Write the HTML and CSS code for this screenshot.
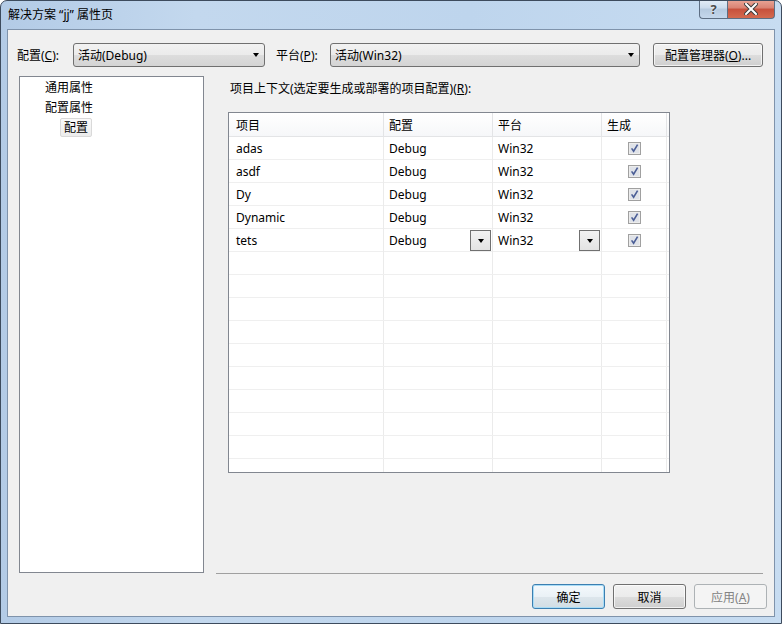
FILE: index.html
```html
<!DOCTYPE html>
<html lang="zh-CN">
<head>
  <meta charset="UTF-8">
  <meta name="viewport" content="width=device-width, initial-scale=1.0">
  <title>解决方案 “jj” 属性页</title>
  <link rel="stylesheet" href="styles.css">
</head>
<body>
  <div class="window">
    <div class="titlebar">
      <span class="title">解决方案 “jj” 属性页</span>
      <div class="caption-buttons">
        <div class="cap help">?</div>
        <div class="cap close">
          <svg width="14" height="12" viewBox="0 0 14 12">
            <path d="M2 1 L12 11 M12 1 L2 11" stroke="#3b3b3b" stroke-width="4" stroke-linecap="square"/>
            <path d="M2 1 L12 11 M12 1 L2 11" stroke="#fff" stroke-width="2" stroke-linecap="square"/>
          </svg>
        </div>
      </div>
    </div>

    <div class="client">
      <!-- configuration / platform selectors -->
      <div class="toprow">
        <label class="lbl lbl-cfg">配置(<u>C</u>):</label>
        <div class="combo combo-cfg"><span>活动(Debug)</span><i class="arrow"></i></div>
        <label class="lbl lbl-plat">平台(<u>P</u>):</label>
        <div class="combo combo-plat"><span>活动(Win32)</span><i class="arrow"></i></div>
        <button class="btn btn-mgr">配置管理器(<u>O</u>)...</button>
      </div>

      <div class="main">
        <div class="tree">
          <div class="node">通用属性</div>
          <div class="node">配置属性</div>
          <div class="node child"><span class="sel">配置</span></div>
        </div>

        <div class="pane">
          <div class="ctx-label">项目上下文(选定要生成或部署的项目配置)(<u>R</u>):</div>
          <div class="grid">
            <div class="row head">
              <div class="cell c1">项目</div>
              <div class="cell">配置</div>
              <div class="cell">平台</div>
              <div class="cell">生成</div>
            </div>
            <div class="row">
              <div class="cell c1">adas</div>
              <div class="cell">Debug</div>
              <div class="cell">Win32</div>
              <div class="cell chk-cell"><svg class="chk" width="13" height="13" viewBox="0 0 13 13"><rect x="0.5" y="0.5" width="12" height="12" fill="#ececec" stroke="#a0a0a0"/><rect x="2" y="2" width="9" height="9" fill="#dfe2e8"/><path d="M3.6 6.4 L5.6 9.2 L9.6 2.6" fill="none" stroke="#4b5e96" stroke-width="1.6"/></svg></div>
            </div>
            <div class="row">
              <div class="cell c1">asdf</div>
              <div class="cell">Debug</div>
              <div class="cell">Win32</div>
              <div class="cell chk-cell"><svg class="chk" width="13" height="13" viewBox="0 0 13 13"><rect x="0.5" y="0.5" width="12" height="12" fill="#ececec" stroke="#a0a0a0"/><rect x="2" y="2" width="9" height="9" fill="#dfe2e8"/><path d="M3.6 6.4 L5.6 9.2 L9.6 2.6" fill="none" stroke="#4b5e96" stroke-width="1.6"/></svg></div>
            </div>
            <div class="row">
              <div class="cell c1">Dy</div>
              <div class="cell">Debug</div>
              <div class="cell">Win32</div>
              <div class="cell chk-cell"><svg class="chk" width="13" height="13" viewBox="0 0 13 13"><rect x="0.5" y="0.5" width="12" height="12" fill="#ececec" stroke="#a0a0a0"/><rect x="2" y="2" width="9" height="9" fill="#dfe2e8"/><path d="M3.6 6.4 L5.6 9.2 L9.6 2.6" fill="none" stroke="#4b5e96" stroke-width="1.6"/></svg></div>
            </div>
            <div class="row">
              <div class="cell c1">Dynamic</div>
              <div class="cell">Debug</div>
              <div class="cell">Win32</div>
              <div class="cell chk-cell"><svg class="chk" width="13" height="13" viewBox="0 0 13 13"><rect x="0.5" y="0.5" width="12" height="12" fill="#ececec" stroke="#a0a0a0"/><rect x="2" y="2" width="9" height="9" fill="#dfe2e8"/><path d="M3.6 6.4 L5.6 9.2 L9.6 2.6" fill="none" stroke="#4b5e96" stroke-width="1.6"/></svg></div>
            </div>
            <div class="row">
              <div class="cell c1">tets</div>
              <div class="cell dd-cell"><span>Debug</span><div class="dd-btn"><i class="arrow"></i></div></div>
              <div class="cell dd-cell"><span>Win32</span><div class="dd-btn"><i class="arrow"></i></div></div>
              <div class="cell chk-cell"><svg class="chk" width="13" height="13" viewBox="0 0 13 13"><rect x="0.5" y="0.5" width="12" height="12" fill="#ececec" stroke="#a0a0a0"/><rect x="2" y="2" width="9" height="9" fill="#dfe2e8"/><path d="M3.6 6.4 L5.6 9.2 L9.6 2.6" fill="none" stroke="#4b5e96" stroke-width="1.6"/></svg></div>
            </div>
            <div class="row"><div class="cell c1"></div><div class="cell"></div><div class="cell"></div><div class="cell"></div></div>
            <div class="row"><div class="cell c1"></div><div class="cell"></div><div class="cell"></div><div class="cell"></div></div>
            <div class="row"><div class="cell c1"></div><div class="cell"></div><div class="cell"></div><div class="cell"></div></div>
            <div class="row"><div class="cell c1"></div><div class="cell"></div><div class="cell"></div><div class="cell"></div></div>
            <div class="row"><div class="cell c1"></div><div class="cell"></div><div class="cell"></div><div class="cell"></div></div>
            <div class="row"><div class="cell c1"></div><div class="cell"></div><div class="cell"></div><div class="cell"></div></div>
            <div class="row"><div class="cell c1"></div><div class="cell"></div><div class="cell"></div><div class="cell"></div></div>
            <div class="row"><div class="cell c1"></div><div class="cell"></div><div class="cell"></div><div class="cell"></div></div>
            <div class="row"><div class="cell c1"></div><div class="cell"></div><div class="cell"></div><div class="cell"></div></div>
            <div class="row"><div class="cell c1"></div><div class="cell"></div><div class="cell"></div><div class="cell"></div></div>
          </div>
        </div>
      </div>

      <div class="separator"></div>

      <div class="footer">
        <button class="btn btn-default">确定</button>
        <button class="btn">取消</button>
        <button class="btn" disabled>应用(<u>A</u>)</button>
      </div>
    </div>
  </div>
</body>
</html>
```

FILE: styles.css
```css
/* Windows 7 style property dialog */
* {
  box-sizing: border-box;
}
body {
  margin: 0;
  font-family: "Noto Sans", "Noto Sans CJK SC", sans-serif;
  font-size: 12px;
  color: #000;
  background: #fff;
}
u {
  text-decoration: underline;
  text-underline-offset: 1px;
}

/* window frame */
.window {
  width: 782px;
  height: 624px;
  display: flex;
  flex-direction: column;
  border: 1px solid #3d4b5d;
  border-radius: 7px 7px 0 0;
  overflow: hidden;
  background: linear-gradient(90deg, #b3cbe6 0%, #c3d8ee 25%, #bed5ed 60%, #c7dcf1 100%);
}
.titlebar {
  display: flex;
  align-items: flex-start;
  height: 28px;
  flex-shrink: 0;
}
.title {
  padding: 5px 0 0 7px;
  line-height: 17px;
  color: #000;
}
.caption-buttons {
  display: flex;
  margin-left: auto;
  margin-right: 6px;
  margin-top: -1px;
}
.cap {
  height: 19px;
  display: flex;
  align-items: center;
  justify-content: center;
  border: 1px solid #5d6e83;
  border-top: none;
}
.help {
  width: 28px;
  border-right: none;
  border-radius: 0 0 0 4px;
  background: linear-gradient(#e4edf7, #cbdbec 45%, #b5c9df 50%, #c4d7eb);
  color: #4a4a4a;
  font-size: 13px;
  font-weight: bold;
  text-shadow: 0 0 2px #fff;
}
.close {
  width: 48px;
  border-radius: 0 0 4px 0;
  background: linear-gradient(#e9a597, #d98272 45%, #c7503c 50%, #d46a4f 100%);
}

/* client area */
.client {
  flex: 1;
  margin: 0 6px 6px;
  border: 1px solid #7f93ab;
  background: #f0f0f0;
  display: flex;
  flex-direction: column;
}
.toprow {
  display: flex;
  align-items: center;
  height: 24px;
  margin-top: 13px;
}
.lbl {
  width: 65px;
  line-height: 17px;
}
.lbl-cfg {
  padding-left: 9px;
}
.lbl-plat {
  padding-left: 11px;
}
.combo {
  height: 24px;
  display: flex;
  align-items: center;
  justify-content: space-between;
  padding: 0 5px 0 4px;
  border: 1px solid #707070;
  border-radius: 3px;
  background: linear-gradient(#f2f2f2 0%, #ebebeb 50%, #dddddd 51%, #d4d4d4 100%);
}
.combo-cfg {
  width: 192px;
}
.combo-plat {
  width: 310px;
}
.arrow {
  display: block;
  width: 0;
  height: 0;
  border-top: 4px solid #000;
  border-left: 3.5px solid transparent;
  border-right: 3.5px solid transparent;
}

.btn {
  width: 73px;
  height: 25px;
  padding: 0;
  font: inherit;
  color: #000;
  border: 1px solid #707070;
  border-radius: 3px;
  background: linear-gradient(#f2f2f2 0%, #ebebeb 50%, #dddddd 51%, #cfcfcf 100%);
  box-shadow: inset 0 0 0 1px rgba(255, 255, 255, 0.7);
}
.btn-mgr {
  width: 110px;
  height: 24px;
  margin-left: 13px;
}
.btn-default {
  border-color: #3c7fb1;
  box-shadow: inset 0 0 0 1px #a9dcf6;
  background: linear-gradient(#f4f9fc 0%, #eaf1f6 50%, #dde6ec 51%, #d2dde4 100%);
}
.btn:disabled {
  color: #838383;
  border-color: #adb2b5;
  background: #f4f4f4;
  box-shadow: none;
}

/* tree + grid */
.main {
  display: flex;
  height: 497px;
  margin-top: 9px;
}
.tree {
  width: 185px;
  margin-left: 11px;
  padding-top: 1px;
  border: 1px solid #828790;
  background: #fff;
}
.node {
  height: 20px;
  line-height: 20px;
  padding-left: 25px;
}
.node.child {
  padding-left: 40px;
}
.sel {
  display: inline-block;
  line-height: 17px;
  padding: 0 3px;
  border: 1px solid #d9d9d9;
  border-radius: 2px;
  background: linear-gradient(#fafafa, #ececec);
}
.pane {
  width: 547px;
  margin-left: 12px;
}
.ctx-label {
  margin-top: 4px;
  padding-left: 14px;
  line-height: 17px;
}
.grid {
  width: 442px;
  height: 361px;
  margin: 15px 0 0 12px;
  border: 1px solid #828790;
  background: #fff;
  overflow: hidden;
}
.row {
  display: grid;
  grid-template-columns: 155px 109px 109px 65px;
  height: 23px;
  border-bottom: 1px solid #efefef;
}
.row.head {
  height: 24px;
  border-bottom: 1px solid #e3e4e6;
  background: linear-gradient(#ffffff, #f6f7f9);
}
.cell {
  line-height: 22px;
  padding: 1px 0 0 5px;
  border-right: 1px solid #ebebeb;
}
.cell.c1 {
  padding-left: 7px;
}
.head .cell {
  line-height: 23px;
  border-right-color: #e3e4e6;
}
.chk-cell {
  display: flex;
  align-items: center;
  justify-content: center;
  padding: 0;
}
.chk {
  display: block;
}
.dd-cell {
  display: flex;
  align-items: center;
  justify-content: space-between;
  padding: 0 1px 0 5px;
}
.dd-cell span {
  padding-top: 1px;
}
.dd-btn {
  width: 21px;
  height: 21px;
  display: flex;
  align-items: center;
  justify-content: center;
  border: 1px solid #707070;
  background: linear-gradient(#f2f2f2, #e3e3e3);
}

/* bottom buttons */
.separator {
  width: 547px;
  height: 1px;
  margin: 0 0 0 208px;
  background: #a0a0a0;
}
.footer {
  display: flex;
  justify-content: flex-end;
  gap: 8px;
  margin-top: 10px;
  padding-right: 7px;
}
```
